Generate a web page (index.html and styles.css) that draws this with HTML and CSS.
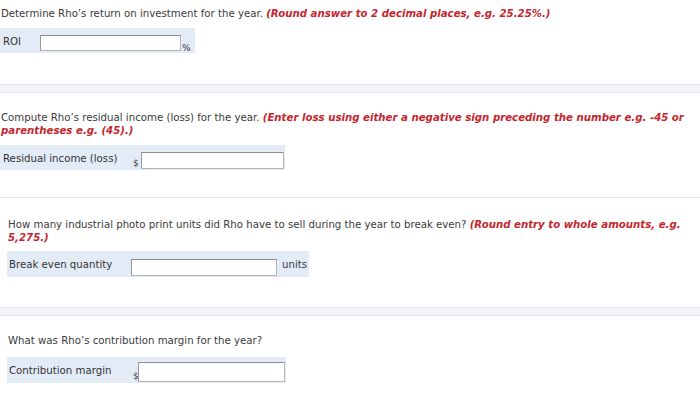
FILE: index.html
```html
<!DOCTYPE html>
<html>
<head>
<meta charset="utf-8">
<link rel="stylesheet" href="styles.css">
</head>
<body>
<div class="q q1">
  <p class="prompt">Determine Rho’s return on investment for the year. <em class="hint">(Round answer to 2 decimal places, e.g. 25.25%.)</em></p>
  <div class="band band-roi">
    <span class="label label-roi">ROI</span>
    <span class="field field-roi"></span>
    <span class="unit unit-pct">%</span>
  </div>
</div>
<div class="sep"></div>
<div class="q q2">
  <p class="prompt">Compute Rho’s residual income (loss) for the year. <em class="hint">(Enter loss using either a negative sign preceding the number e.g. -45 or<br>parentheses e.g. (45).)</em></p>
  <div class="band band-ri">
    <span class="label label-ri">Residual income (loss)</span>
    <span class="cur">$</span>
    <span class="field field-ri"></span>
  </div>
</div>
<div class="rule"></div>
<div class="q q3">
  <p class="prompt">How many industrial photo print units did Rho have to sell during the year to break even? <em class="hint">(Round entry to whole amounts, e.g.<br>5,275.)</em></p>
  <div class="band band-be">
    <span class="label label-be">Break even quantity</span>
    <span class="field field-be"></span>
    <span class="unit unit-units">units</span>
  </div>
</div>
<div class="sep sep3"></div>
<div class="q q4">
  <p class="prompt">What was Rho’s contribution margin for the year?</p>
  <div class="band band-cm">
    <span class="label label-cm">Contribution margin</span>
    <span class="cur">$</span>
    <span class="field field-cm"></span>
  </div>
</div>
</body>
</html>
```
FILE: styles.css
```css
html, body {
  margin: 0;
  padding: 0;
  background: #fff;
}
body {
  font-family: "DejaVu Sans", Verdana, sans-serif;
  font-size: 10.2px;
  color: #3a3a3a;
  width: 700px;
  height: 401px;
  overflow: hidden;
}
.q {
  padding-left: 1px;
}
.q3, .q4 {
  padding-left: 8px;
}
.prompt {
  margin: 0;
  line-height: 13px;
  white-space: nowrap;
}
.hint {
  color: #c4262e;
  font-weight: bold;
  font-style: italic;
}
.q1 .prompt { padding-top: 7px; }
.q2 .prompt { padding-top: 18px; }
.q3 .prompt { padding-top: 20px; }
.q4 .prompt { padding-top: 18px; }

.band {
  display: flex;
  align-items: flex-start;
  background: #e3ebf7;
  height: 25px;
  box-sizing: border-box;
  margin-left: -1px;
}

.label {
  padding-left: 3px;
  padding-top: 8px;
  line-height: 12px;
  box-sizing: border-box;
  white-space: nowrap;
  color: #333;
}
.field {
  display: block;
  background: #fff;
  border: 1px solid #b5b5b5;
  border-top-color: #8f8f8f;
  border-left-color: #9a9a9a;
  box-sizing: border-box;
  margin-top: 7px;
  height: 17px;
}
.unit, .cur {
  line-height: 11px;
}

.band-roi { width: 195px; margin-top: 8px; }
.label-roi { width: 40px; }
.field-roi { width: 141px; height: 16px; }
.unit-pct { padding-top: 15px; padding-left: 1px; font-size: 9px; }

.band-ri { width: 285px; margin-top: 8px; }
.label-ri { width: 131px; }
.cur { padding-top: 13px; width: 10px; padding-left: 2px; box-sizing: border-box; font-size: 9px; }
.field-ri { width: 143px; }

.band-be { width: 302px; margin-top: 7px; height: 26px; }
.label-be { width: 124px; padding-left: 2px; }
.field-be { width: 146px; margin-top: 8px; height: 17px; }
.unit-units { padding-top: 8px; padding-left: 5px; }

.band-cm { width: 279px; margin-top: 10px; height: 26px; }
.label-cm { width: 124px; padding-left: 2px; }
.band-cm .cur { padding-top: 14px; width: 7px; }
.field-cm { width: 147px; margin-top: 5px; height: 20px; }

.sep {
  margin-top: 31px;
  height: 9px;
  box-sizing: border-box;
  border-top: 1px solid #e3e6ea;
  border-bottom: 1px solid #e3e6ea;
  background: #f1f4f9;
}
.sep3 { margin-top: 30px; }
.rule {
  margin-top: 27px;
  height: 1px;
  background: #e3e6ea;
}
```
